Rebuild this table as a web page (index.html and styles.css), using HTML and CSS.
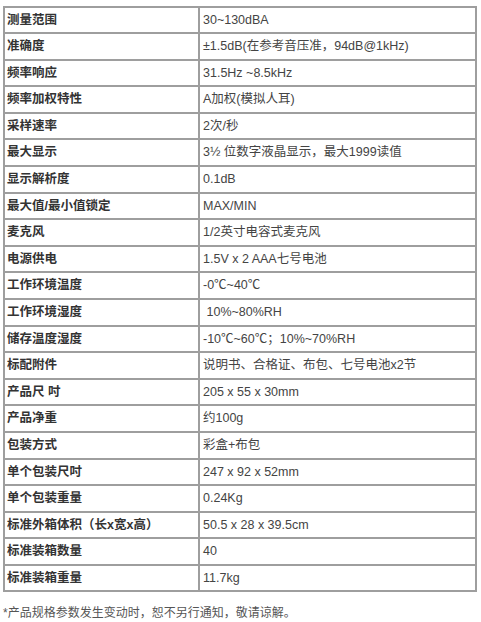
FILE: index.html
```html
<!DOCTYPE html>
<html lang="zh-CN">
<head>
<meta charset="utf-8">
<title>规格参数</title>
<link rel="stylesheet" href="styles.css">
</head>
<body>
<div class="page">
  <table class="spec">
    <colgroup><col class="c-label"><col class="c-value"></colgroup>
    <tbody>
      <tr><th>测量范围</th><td>30~130dBA</td></tr>
      <tr><th>准确度</th><td>±1.5dB(在参考音压准，94dB@1kHz)</td></tr>
      <tr><th>频率响应</th><td>31.5Hz ~8.5kHz</td></tr>
      <tr><th>频率加权特性</th><td>A加权(模拟人耳)</td></tr>
      <tr><th>采样速率</th><td>2次/秒</td></tr>
      <tr><th>最大显示</th><td>3½ 位数字液晶显示，最大1999读值</td></tr>
      <tr><th>显示解析度</th><td>0.1dB</td></tr>
      <tr><th>最大值/最小值锁定</th><td>MAX/MIN</td></tr>
      <tr><th>麦克风</th><td>1/2英寸电容式麦克风</td></tr>
      <tr><th>电源供电</th><td>1.5V x 2 AAA七号电池</td></tr>
      <tr><th>工作环境温度</th><td>-0℃~40℃</td></tr>
      <tr><th>工作环境湿度</th><td>&nbsp;10%~80%RH</td></tr>
      <tr><th>储存温度湿度</th><td>-10℃~60℃；10%~70%RH</td></tr>
      <tr><th>标配附件</th><td>说明书、合格证、布包、七号电池x2节</td></tr>
      <tr><th>产品尺 吋</th><td>205 x 55 x 30mm</td></tr>
      <tr><th>产品净重</th><td>约100g</td></tr>
      <tr><th>包装方式</th><td>彩盒+布包</td></tr>
      <tr><th>单个包装尺吋</th><td>247 x 92 x 52mm</td></tr>
      <tr><th>单个包装重量</th><td>0.24Kg</td></tr>
      <tr><th>标准外箱体积（长x宽x高）</th><td>50.5 x 28 x 39.5cm</td></tr>
      <tr><th>标准装箱数量</th><td>40</td></tr>
      <tr><th>标准装箱重量</th><td>11.7kg</td></tr>
    </tbody>
  </table>
  <p class="note">*产品规格参数发生变动时，恕不另行通知，敬请谅解。</p>
</div>
</body>
</html>
```
FILE: styles.css
```css
html, body {
  margin: 0;
  padding: 0;
  background: #ffffff;
}

.page {
  padding: 6px 4px 0 3px;
  font-family: "Liberation Sans", "Noto Sans CJK SC", sans-serif;
}

.spec {
  width: 474px;
  border-collapse: separate;
  border-spacing: 0;
  border-top: 2px solid #9e9e9e;
  border-left: 2px solid #9e9e9e;
  table-layout: fixed;
  font-size: 12.5px;
}

.c-label { width: 195px; }

.spec tr { height: 26.6px; }
.spec tr:first-child { height: 26px; }

.spec th,
.spec td {
  box-sizing: border-box;
  padding: 0 0 0 2px;
  border-right: 2px solid #9e9e9e;
  border-bottom: 2px solid #9e9e9e;
  text-align: left;
  vertical-align: middle;
  white-space: nowrap;
  line-height: 1;
}

.spec th {
  font-weight: bold;
  color: #333333;
}

.spec td {
  padding-left: 3px;
  font-weight: normal;
  color: #444444;
}

.note {
  margin: 15px 0 0 0;
  font-size: 12px;
  color: #555555;
  line-height: 1;
}
```
